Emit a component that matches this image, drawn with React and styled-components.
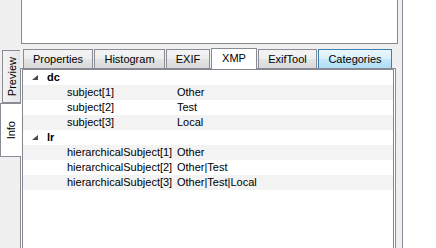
import React from 'react';
import styled, { createGlobalStyle } from 'styled-components';

const GlobalStyle = createGlobalStyle`
    html, body {
        margin : 0 ;
        padding : 0 ;
        background : #fff ;
    }
    body {
        font-family : 'Liberation Sans', Arial, sans-serif ;
        font-size : 11px ;
        color : #000 ;
    }
    * { box-sizing : border-box ; }
`;

const Screen = styled.div`
    display : flex ;
    width : 436px ;
    height : 248px ;
    overflow : hidden ;
    background : #fff ;
`;

const Window = styled.div`
    width : 403px ;
    height : 100% ;
    background : #f0f0f0 ;
    border-right : 1px solid #8c9199 ;
    display : flex ;
    flex-direction : column ;
`;

const PreviewBox = styled.div`
    margin-left : 21px ;
    width : 377px ;
    height : 44px ;
    flex-shrink : 0 ;
    background : #fff ;
    border : 1px solid #848890 ;
    border-top : none ;
`;

const Body = styled.div`
    flex : 1 ;
    display : flex ;
    margin-top : 4px ;
    min-height : 0 ;
`;

const SideTabs = styled.div`
    width : 20px ;
    flex-shrink : 0 ;
    display : flex ;
    flex-direction : column ;
    padding-top : 2px ;
`;

const SideTab = styled.div`
    display : flex ;
    align-items : center ;
    justify-content : center ;
    height : ${props => props.$active ? 54 : 53}px ;
    width : ${props => props.$active ? 21 : 18}px ;
    margin-left : ${props => props.$active ? 0 : 2}px ;
    margin-right : ${props => props.$active ? -1 : 0}px ;
    position : relative ;
    z-index : ${props => props.$active ? 1 : 0} ;
    border : 1px solid #898c95 ;
    border-right : none ;
    background : ${props => props.$active
        ? '#fff'
        : 'linear-gradient(to right, #f4f4f4, #e6e6e6)'} ;

    span {
        writing-mode : vertical-rl ;
        transform : rotate(180deg) ;
        white-space : nowrap ;
    }
`;

const Main = styled.div`
    flex : 1 ;
    display : flex ;
    flex-direction : column ;
    min-width : 0 ;
`;

const TabRow = styled.div`
    display : flex ;
    align-items : flex-end ;
    height : 20px ;
    padding-left : 3px ;
    gap : 1px ;
    flex-shrink : 0 ;
`;

const Tab = styled.div`
    width : ${props => props.$w}px ;
    height : ${props => props.$active ? 21 : 19}px ;
    margin-bottom : ${props => props.$active ? -1 : 0}px ;
    position : relative ;
    z-index : ${props => props.$active ? 1 : 0} ;
    display : flex ;
    align-items : center ;
    justify-content : center ;
    padding-bottom : ${props => props.$active ? 2 : 0}px ;
    border : 1px solid ${props => props.$hover ? '#3c7fb1' : '#898c95'} ;
    border-bottom : none ;
    background : ${props => props.$active
        ? '#fff'
        : props.$hover
            ? 'linear-gradient(to bottom, #eaf6fd 0%, #d9f0fc 50%, #c4e8fc 51%, #b0dcf6 100%)'
            : 'linear-gradient(to bottom, #f4f4f4 0%, #eeeeee 50%, #e4e4e4 51%, #dadada 100%)'} ;
    white-space : nowrap ;
`;

const Page = styled.div`
    width : 376px ;
    flex : 1 ;
    background : #fff ;
    border : 1px solid #898c95 ;
    border-bottom : none ;
    padding : 0 1px ;
    display : flex ;
`;

const List = styled.div`
    flex : 1 ;
    border : 1px solid #828790 ;
    border-bottom : none ;
    background : #fff ;
`;

const Row = styled.div`
    display : flex ;
    align-items : center ;
    height : 15px ;
    line-height : 15px ;
    background : ${props => props.$stripe ? '#f3f3f3' : '#fff'} ;
    white-space : nowrap ;
`;

const Expander = styled.svg`
    width : 6px ;
    height : 5px ;
    margin-left : 9px ;
    margin-right : 9px ;
`;

const GroupName = styled.span`
    font-weight : bold ;
`;

const Key = styled.span`
    width : 154px ;
    padding-left : 44px ;
    flex-shrink : 0 ;
`;

const Value = styled.span``;

const groups = [
    {
        name : 'dc',
        items : [
            ['subject[1]', 'Other'],
            ['subject[2]', 'Test'],
            ['subject[3]', 'Local'],
        ],
    },
    {
        name : 'lr',
        items : [
            ['hierarchicalSubject[1]', 'Other'],
            ['hierarchicalSubject[2]', 'Other|Test'],
            ['hierarchicalSubject[3]', 'Other|Test|Local'],
        ],
    },
];

const tabs = [
    { label : 'Properties', w : 70 },
    { label : 'Histogram', w : 71 },
    { label : 'EXIF', w : 44 },
    { label : 'XMP', w : 46, active : true },
    { label : 'ExifTool', w : 59 },
    { label : 'Categories', w : 74, hover : true },
];

const App = () => {
    const rows = [];
    groups.forEach(g => {
        rows.push({ type : 'group', name : g.name });
        g.items.forEach(([k, v]) => rows.push({ type : 'item', k, v }));
    });

    return (
        <>
            <GlobalStyle />
            <Screen>
                <Window>
                    <PreviewBox />
                    <Body>
                        <SideTabs>
                            <SideTab><span>Preview</span></SideTab>
                            <SideTab $active><span>Info</span></SideTab>
                        </SideTabs>
                        <Main>
                            <TabRow>
                                {tabs.map(t => (
                                    <Tab key={t.label} $w={t.w} $active={t.active} $hover={t.hover}>
                                        {t.label}
                                    </Tab>
                                ))}
                            </TabRow>
                            <Page>
                                <List>
                                    {rows.map((r, i) => (
                                        <Row key={i} $stripe={i % 2 === 1}>
                                            {r.type === 'group' ? (
                                                <>
                                                    <Expander viewBox="0 0 6 5">
                                                        <polygon points="6,0 6,5 0,5" fill="#4a4a4a" />
                                                    </Expander>
                                                    <GroupName>{r.name}</GroupName>
                                                </>
                                            ) : (
                                                <>
                                                    <Key>{r.k}</Key>
                                                    <Value>{r.v}</Value>
                                                </>
                                            )}
                                        </Row>
                                    ))}
                                </List>
                            </Page>
                        </Main>
                    </Body>
                </Window>
            </Screen>
        </>
    );
};

export default App;
